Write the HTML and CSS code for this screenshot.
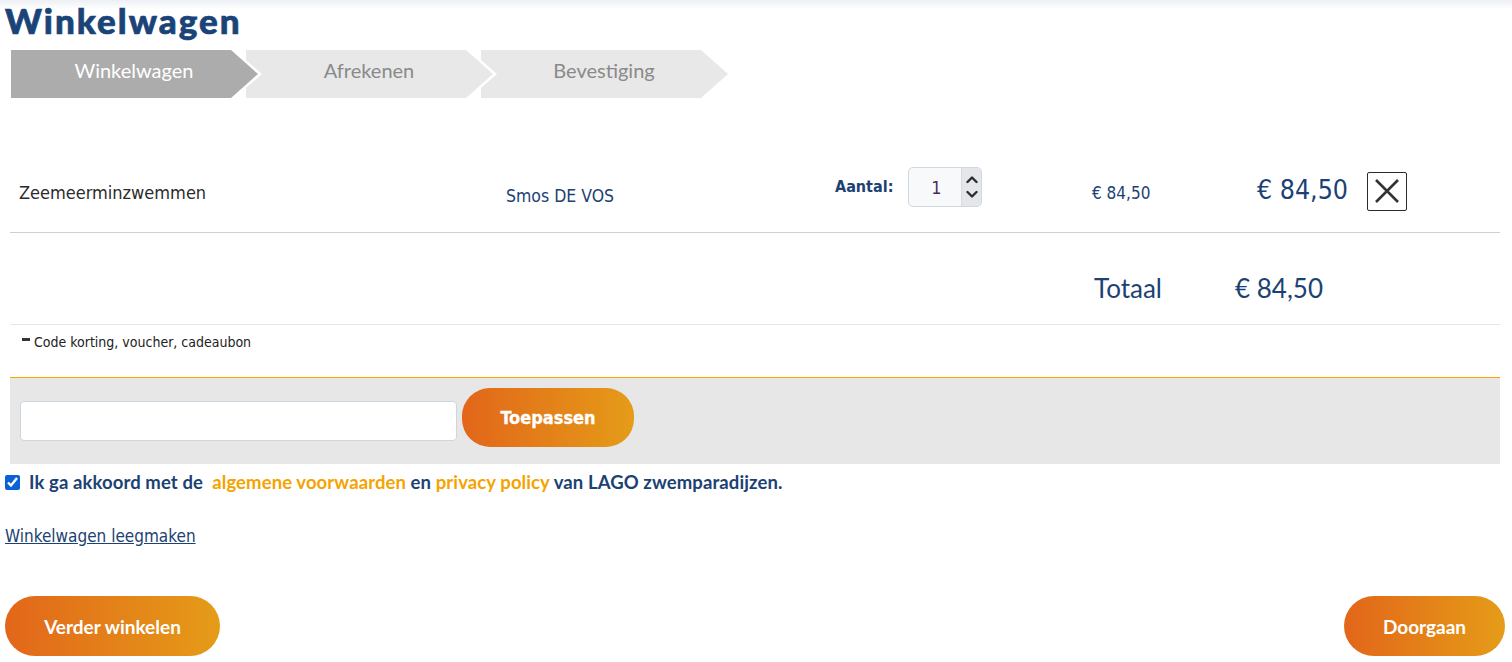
FILE: index.html
```html
<!DOCTYPE html>
<html lang="nl">
<head>
<meta charset="utf-8">
<title>Winkelwagen</title>
<link rel="stylesheet" href="styles.css">
</head>
<body>
<div class="page">
  <h1 class="title">Winkelwagen</h1>
  <ol class="steps">
    <li class="step step-active">Winkelwagen</li>
    <li class="step">Afrekenen</li>
    <li class="step">Bevestiging</li>
  </ol>

  <div class="cart">
    <div class="cart-row">
      <div class="c-name">Zeemeerminzwemmen</div>
      <div class="c-variant">Smos DE VOS</div>
      <div class="c-qty">
        <span class="qty-label">Aantal:</span>
        <div class="qty">
          <span class="qty-val">1</span>
          <div class="qty-spin">
            <svg width="12" height="9" viewBox="0 0 12 9"><path d="M1.5 7 L6 2.5 L10.5 7" fill="none" stroke="#2b2b2b" stroke-width="2.4" stroke-linecap="round" stroke-linejoin="round"/></svg>
            <svg width="12" height="9" viewBox="0 0 12 9"><path d="M1.5 2 L6 6.5 L10.5 2" fill="none" stroke="#2b2b2b" stroke-width="2.4" stroke-linecap="round" stroke-linejoin="round"/></svg>
          </div>
        </div>
      </div>
      <div class="c-price">€ 84,50</div>
      <div class="c-total">€ 84,50</div>
      <div class="c-remove">
        <button class="remove" type="button" aria-label="Verwijderen">
          <svg width="24" height="24" viewBox="0 0 24 24"><path d="M1 1 L23 23 M23 1 L1 23" stroke="#333" stroke-width="2.6" fill="none"/></svg>
        </button>
      </div>
    </div>
    <div class="total-row">
      <span class="total-label">Totaal</span>
      <span class="total-value">€ 84,50</span>
    </div>
  </div>

  <div class="code-toggle"><span class="dash"></span>Code korting, voucher, cadeaubon</div>

  <div class="code-box">
    <input class="code-input" type="text">
    <button class="btn btn-apply" type="button">Toepassen</button>
  </div>

  <label class="agree">
    <input type="checkbox" checked>
    <span>Ik ga akkoord met de&nbsp; <a class="link-orange" href="#">algemene voorwaarden</a> en <a class="link-orange" href="#">privacy policy</a> van LAGO zwemparadijzen.</span>
  </label>

  <a class="empty-link" href="#">Winkelwagen leegmaken</a>

  <div class="actions">
    <button class="btn btn-big btn-back" type="button">Verder winkelen</button>
    <button class="btn btn-big btn-next" type="button">Doorgaan</button>
  </div>
</div>
</body>
</html>
```

FILE: styles.css
```css
* { box-sizing: border-box; }

html, body {
  margin: 0;
  padding: 0;
}

body {
  font-family: Lato, "Open Sans", sans-serif;
  color: #1c4273;
  background: linear-gradient(#eceff4, #ffffff 9px) no-repeat;
  background-size: 100% 9px;
}

.page {
  padding: 0 7px 0 5px;
}

.title {
  margin: 0;
  font-size: 35px;
  line-height: 40px;
  font-weight: 900;
  letter-spacing: 2px;
  -webkit-text-stroke: 0.7px #1a4378;
  color: #1a4378;
}

/* steps */
.steps {
  list-style: none;
  margin: 10px 0 0 6px;
  padding: 0;
  display: flex;
}

.step {
  position: relative;
  width: 220px;
  height: 48px;
  margin-right: 15px;
  background: #e8e8e8;
  color: #8a8a8a;
  font-size: 20px;
  display: flex;
  align-items: center;
  justify-content: center;
  padding: 0 0 8px 26px;
}

.step:nth-child(1) { z-index: 3; }
.step:nth-child(2) { z-index: 2; }
.step:nth-child(3) { z-index: 1; }

.step::before,
.step::after {
  content: "";
  position: absolute;
  top: 0;
  left: 100%;
  width: 0;
  height: 0;
  border-style: solid;
  border-color: transparent;
}

.step::before {
  top: -3px;
  border-width: 27px 0 27px 31px;
  border-left-color: #ffffff;
}

.step::after {
  border-width: 24px 0 24px 27px;
  border-left-color: #e8e8e8;
}

.step-active {
  background: #acacac;
  color: #ffffff;
}

.step-active::after {
  border-left-color: #acacac;
}

/* cart */
.cart {
  margin: 52px 0 0 5px;
  width: 1490px;
}

.cart-row {
  display: grid;
  grid-template-columns: 487px 329px 257px 165px 110px auto;
  align-items: center;
  height: 83px;
  padding-left: 9px;
  border-bottom: 1px solid #cfcfcf;
}

.c-name {
  font-family: "Liberation Sans Narrow", "DejaVu Sans Condensed", sans-serif;
  font-size: 18px;
  color: #2b2b2b;
  padding-top: 2px;
}

.c-variant {
  font-family: "Liberation Sans Narrow", "DejaVu Sans Condensed", sans-serif;
  font-size: 17.5px;
  color: #1c4273;
  padding-top: 10px;
}

.c-qty {
  display: flex;
  align-items: center;
  gap: 15px;
  padding-bottom: 8px;
}

.qty-label {
  font-family: "Liberation Sans Narrow", "DejaVu Sans Condensed", sans-serif;
  font-weight: 700;
  font-size: 16px;
  color: #1c4273;
  padding-bottom: 2px;
}

.qty {
  display: flex;
  width: 74px;
  height: 40px;
  border: 1px solid #cfd8e0;
  border-radius: 5px;
  background: #f8f9fa;
  overflow: hidden;
}

.qty-val {
  flex: 1;
  display: flex;
  align-items: center;
  justify-content: center;
  padding-left: 2px;
  font-family: "Liberation Sans Narrow", "DejaVu Sans Condensed", sans-serif;
  font-size: 18px;
  color: #4b2b5c;
}

.qty-spin {
  width: 20px;
  background: #e4e6e9;
  display: flex;
  flex-direction: column;
  align-items: center;
  justify-content: center;
  gap: 6px;
  border-left: 1px solid #d6dbe0;
}

.c-price {
  font-family: "Liberation Sans Narrow", "DejaVu Sans Condensed", sans-serif;
  font-size: 17px;
  color: #1c4273;
  padding-top: 4px;
}

.c-total {
  font-family: "Liberation Sans Narrow", "DejaVu Sans Condensed", sans-serif;
  font-size: 26.5px;
  color: #1c4273;
  padding-bottom: 4px;
}

.c-remove {
  display: flex;
}

.remove {
  width: 40px;
  height: 39px;
  padding: 0;
  margin: 0;
  border: 1px solid #2b2b2b;
  border-radius: 2px;
  background: #ffffff;
  display: flex;
  align-items: center;
  justify-content: center;
}

.total-row {
  display: flex;
  align-items: center;
  height: 92px;
  padding: 18px 0 0 1084px;
  border-bottom: 1px solid #e6e6e6;
  font-size: 26px;
  color: #1c4273;
}

.total-label {
  width: 141px;
}

/* code */
.code-toggle {
  display: flex;
  align-items: center;
  margin: 9px 0 0 17px;
  height: 16px;
  font-family: "Liberation Sans Narrow", "DejaVu Sans Condensed", sans-serif;
  font-size: 14px;
  color: #222;
}

.dash {
  width: 8px;
  height: 3px;
  background: #333;
  margin-right: 4px;
  margin-bottom: 6px;
}

.code-box {
  margin: 27px 0 0 5px;
  width: 1490px;
  height: 87px;
  background: #e7e7e7;
  border-top: 1px solid #ffa500;
  display: flex;
  align-items: flex-start;
  gap: 5px;
  padding: 10px 10px 0;
}

.code-input {
  width: 437px;
  height: 40px;
  margin-top: 13px;
  border: 1px solid #ccd6e0;
  border-radius: 4px;
  background: #ffffff;
  outline: none;
}

.btn {
  border: 0;
  color: #ffffff;
  font-weight: 700;
  cursor: pointer;
  background: linear-gradient(90deg, #e2661a, #e59c18);
}

.btn-apply {
  width: 172px;
  height: 59px;
  border-radius: 28px;
  font-family: "Liberation Sans Narrow", "DejaVu Sans Condensed", sans-serif;
  font-size: 18px;
  -webkit-text-stroke: 0.3px #ffffff;
}

/* agreement */
.agree {
  display: flex;
  align-items: center;
  gap: 9px;
  margin-top: 7px;
  font-size: 18.5px;
  font-weight: 700;
  letter-spacing: 0.1px;
  color: #1c4273;
}

.agree input {
  width: 15px;
  height: 15px;
  margin: 0;
  accent-color: #0b62d6;
}

.link-orange {
  color: #f5a300;
  text-decoration: none;
}

.empty-link {
  display: inline-block;
  margin-top: 33px;
  font-family: "Liberation Sans Narrow", "DejaVu Sans Condensed", sans-serif;
  font-size: 17px;
  color: #1c4273;
  text-decoration: underline;
}

.actions {
  display: flex;
  justify-content: space-between;
  margin-top: 50px;
}

.btn-big {
  height: 60px;
  border-radius: 30px;
  font-family: Lato, "Open Sans", sans-serif;
  font-size: 19px;
}

.btn-back { width: 215px; }
.btn-next { width: 161px; }
```
